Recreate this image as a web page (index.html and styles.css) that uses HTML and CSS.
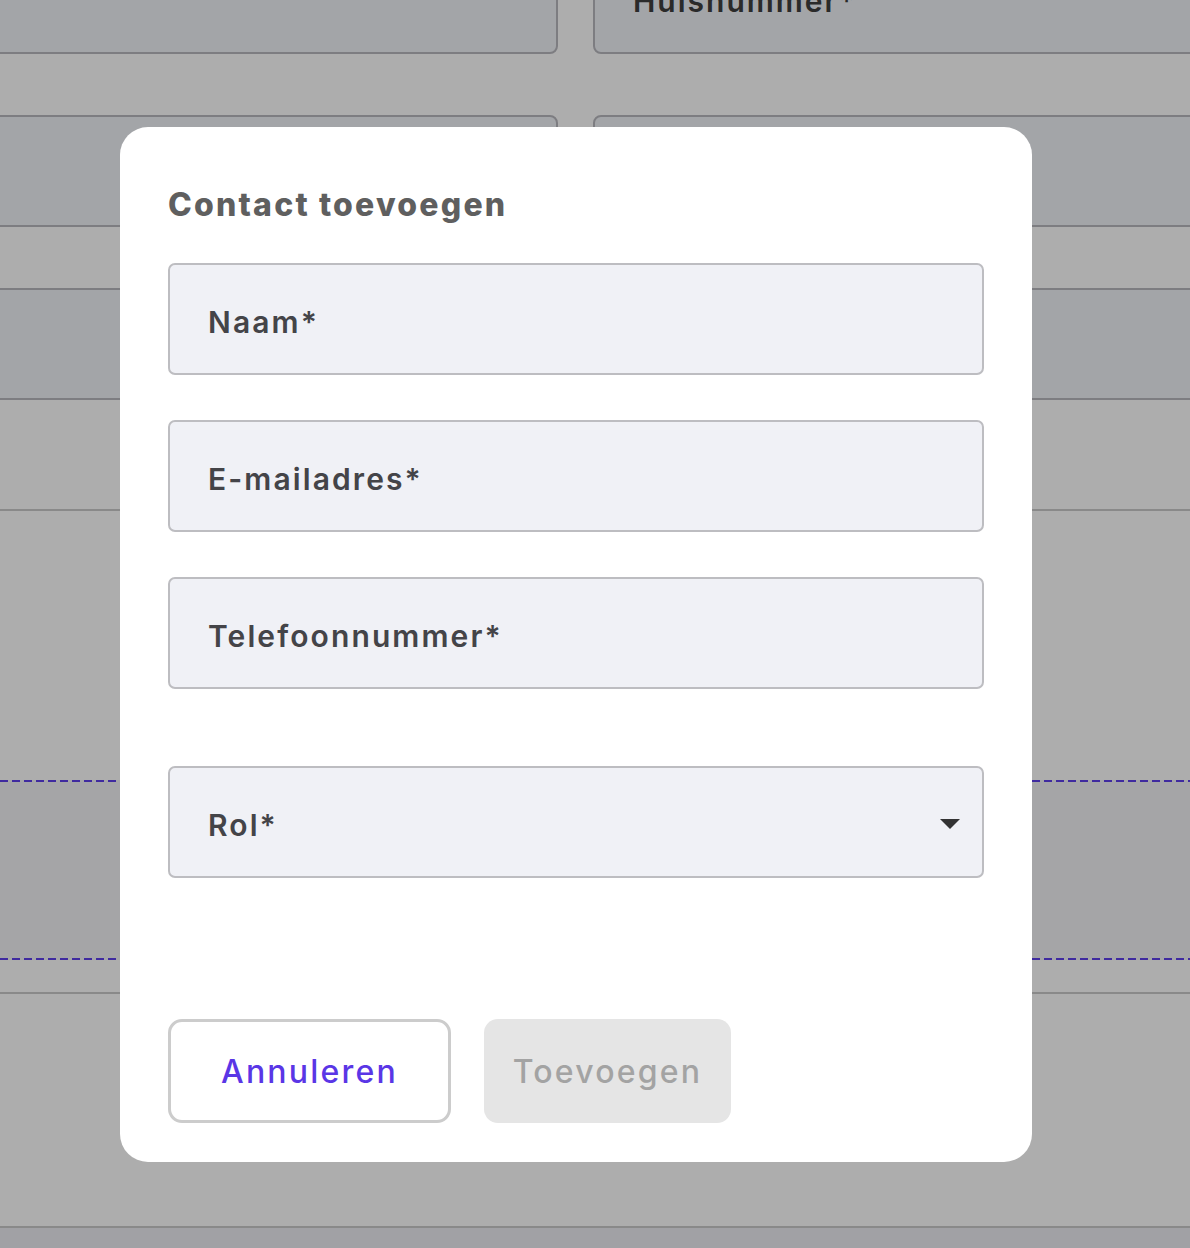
FILE: index.html
```html
<!DOCTYPE html>
<html lang="nl">
<head>
<meta charset="utf-8">
<title>Contact toevoegen</title>
<link rel="stylesheet" href="styles.css">
</head>
<body>
<div class="page">
  <div class="bg-row">
    <div class="bg-field"></div>
    <div class="bg-field"><span class="bg-label">Huisnummer*</span></div>
  </div>
  <div class="bg-row">
    <div class="bg-field"></div>
    <div class="bg-field"></div>
  </div>
  <div class="bg-field bg-wide"></div>
  <div class="bg-divider bg-divider-first"></div>
  <div class="bg-dropzone"></div>
  <div class="bg-divider bg-divider-second"></div>
  <div class="bg-footer"></div>
</div>

<div class="overlay">
  <div class="modal" role="dialog" aria-labelledby="modal-title">
    <h2 class="modal-title" id="modal-title">Contact toevoegen</h2>
    <div class="fields">
      <div class="field"><span class="field-label">Naam*</span></div>
      <div class="field"><span class="field-label">E-mailadres*</span></div>
      <div class="field"><span class="field-label">Telefoonnummer*</span></div>
      <div class="field field-select">
        <span class="field-label">Rol*</span>
        <svg class="caret" width="20" height="10" viewBox="0 0 20 10" aria-hidden="true"><path d="M0 0 H20 L10 10 Z" fill="#333333"/></svg>
      </div>
    </div>
    <div class="actions">
      <button class="btn btn-cancel" type="button">Annuleren</button>
      <button class="btn btn-add" type="button" disabled>Toevoegen</button>
    </div>
  </div>
</div>
</body>
</html>
```

FILE: styles.css
```css
* { box-sizing: border-box; }

html, body {
  margin: 0;
  padding: 0;
  background: #ffffff;
  font-family: Inter, "Noto Sans", "DejaVu Sans", sans-serif;
  overflow: hidden;
}

/* ---------- underlying page ---------- */
.page {
  width: 1751px;
  margin-left: -300px;
  margin-top: -58px;
  display: flex;
  flex-direction: column;
}

.bg-row {
  display: grid;
  grid-template-columns: 858px 858px;
  column-gap: 35px;
  margin-bottom: 61px;
}

.bg-field {
  height: 112px;
  background: #f1f3f8;
  border: 2px solid #b9b9bf;
  border-radius: 8px;
  padding: 0 38px;
  display: flex;
  align-items: center;
}

.bg-wide {
  width: 100%;
}

.bg-label {
  font-size: 30px;
  font-weight: 600;
  letter-spacing: 2px;
  color: #3e3e3e;
  margin-top: 6px;
}

.bg-divider {
  height: 2px;
  background: #cbcbcb;
}

.bg-divider-first {
  margin-top: 109px;
}

.bg-dropzone {
  margin-top: 269px;
  height: 180px;
  background-color: #f3f3f6;
  background-image:
    repeating-linear-gradient(to right, #5d3eeb 0 8px, transparent 8px 12px),
    repeating-linear-gradient(to right, #5d3eeb 0 8px, transparent 8px 12px);
  background-size: 100% 2px, 100% 2px;
  background-position: 0 0, 0 100%;
  background-repeat: no-repeat;
}

.bg-divider-second {
  margin-top: 32px;
}

.bg-footer {
  margin-top: 232px;
  height: 60px;
  border-top: 2px solid #cbcbcb;
  background: #eeedf4;
}

/* ---------- overlay + modal ---------- */
.overlay {
  position: fixed;
  inset: 0;
  background: rgba(0, 0, 0, 0.32);
  padding: 127px 0 0 120px;
}

.modal {
  width: 912px;
  background: #ffffff;
  border-radius: 28px;
  padding: 48px 48px 39px;
  display: flex;
  flex-direction: column;
}

.modal-title {
  margin: 12px 0 0;
  font-size: 32px;
  line-height: 36px;
  font-weight: 800;
  letter-spacing: 2.2px;
  color: #5f5f5f;
}

.fields {
  margin-top: 40px;
  display: flex;
  flex-direction: column;
  gap: 45px;
}

.field {
  height: 112px;
  background: #f0f1f6;
  border: 2px solid #bdbdc1;
  border-radius: 7px;
  padding: 6px 22px 0 38px;
  display: flex;
  align-items: center;
  justify-content: space-between;
}

.field-select {
  margin-top: 32px;
}

.field-label {
  font-size: 30px;
  font-weight: 600;
  letter-spacing: 2.1px;
  color: #444448;
}

.caret {
  display: block;
  margin-top: -3px;
}

.actions {
  margin-top: 141px;
  display: flex;
  gap: 33px;
}

.btn {
  height: 104px;
  border-radius: 14px;
  font-family: inherit;
  font-size: 32px;
  font-weight: 500;
  letter-spacing: 2.2px;
  padding: 0;
  display: flex;
  align-items: center;
  justify-content: center;
}

.btn-cancel {
  width: 283px;
  background: #ffffff;
  border: 3px solid #cccccc;
  color: #5a36e6;
}

.btn-add {
  width: 247px;
  background: #e5e5e5;
  border: none;
  color: #a3a3a3;
}
```
